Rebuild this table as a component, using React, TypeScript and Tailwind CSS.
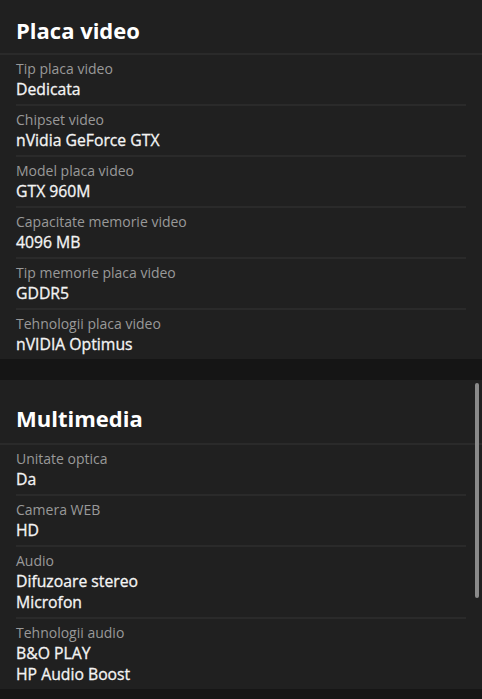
import React from "react";

type Row = { label: string; values: string[] };

const video: Row[] = [
  { label: "Tip placa video", values: ["Dedicata"] },
  { label: "Chipset video", values: ["nVidia GeForce GTX"] },
  { label: "Model placa video", values: ["GTX 960M"] },
  { label: "Capacitate memorie video", values: ["4096 MB"] },
  { label: "Tip memorie placa video", values: ["GDDR5"] },
  { label: "Tehnologii placa video", values: ["nVIDIA Optimus"] },
];

const multimedia: Row[] = [
  { label: "Unitate optica", values: ["Da"] },
  { label: "Camera WEB", values: ["HD"] },
  { label: "Audio", values: ["Difuzoare stereo", "Microfon"] },
  { label: "Tehnologii audio", values: ["B&O PLAY", "HP Audio Boost"] },
];

function Rows({ rows }: { rows: Row[] }) {
  return (
    <div className="px-4">
      {rows.map((r, i) => (
        <div
          key={r.label}
          className={
            "pt-[4px] pb-[4px] " +
            (i < rows.length - 1 ? "border-b-2 border-[#2a2a2a]" : "")
          }
        >
          <div className="text-[14px] leading-[20px] text-[#999999]">{r.label}</div>
          {r.values.map((v) => (
            <div
              key={v}
              className="text-[15.75px] leading-[21px] font-normal text-[#f4f4f4] [-webkit-text-stroke:0.3px_#f4f4f4]"
            >
              {v}
            </div>
          ))}
        </div>
      ))}
    </div>
  );
}

export default function App() {
  return (
    <div
      className="relative w-[482px] h-[699px] overflow-hidden bg-[#161616]"
      style={{ fontFamily: '"Open Sans", "Noto Sans", sans-serif' }}
    >
      <section className="bg-[#202020]">
        <div className="h-[55px] border-b-2 border-[#2a2a2a] px-4 flex items-center pt-[6px]">
          <h2 className="text-[22px] font-bold text-white leading-none">Placa video</h2>
        </div>
        <Rows rows={video} />
      </section>
      <div className="h-[21px] bg-[#151515]" />
      <section className="bg-[#202020]">
        <div className="h-[65px] border-b-2 border-[#2a2a2a] px-4 flex items-center pt-[12px]">
          <h2 className="text-[22px] font-bold text-white leading-none">Multimedia</h2>
        </div>
        <Rows rows={multimedia} />
      </section>
      <div className="absolute right-[3px] top-[383px] w-[4px] h-[215px] rounded-sm bg-[#8a8a8a]" />
    </div>
  );
}
